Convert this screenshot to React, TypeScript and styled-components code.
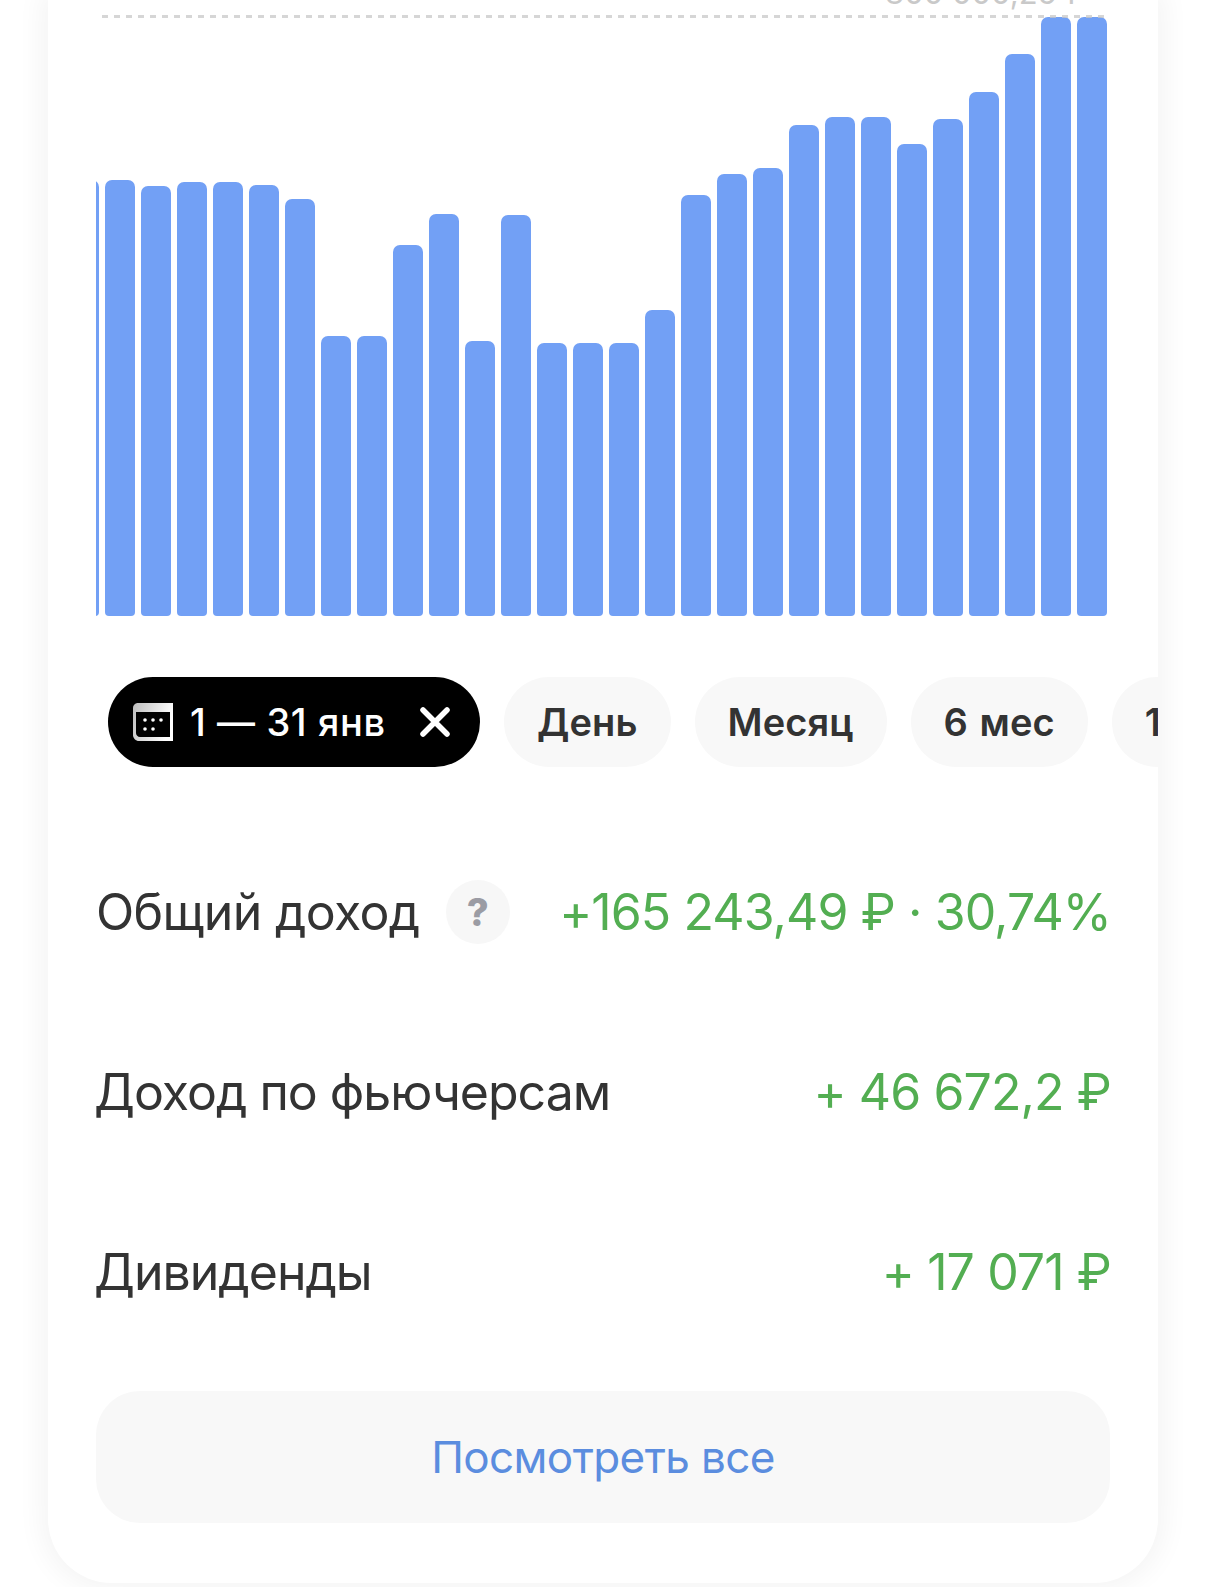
import styled, { createGlobalStyle } from 'styled-components';

const BAR_TOPS = [
  180, 180, 186, 182, 182, 185, 199, 336, 336, 245, 214, 341, 215, 343, 343, 343, 310, 195, 174, 168, 125, 117, 117,
  144, 119, 92, 54, 17, 17,
];
const CHART_BOTTOM = 616;

const FILTERS = ['День', 'Месяц', '6 мес', '1 год'];

const GlobalStyle = createGlobalStyle`
  html, body {
    margin: 0;
    height: 1587px;
    overflow: hidden;
    background: #fff;
  }
  body {
    font-family: Inter, "Noto Sans", sans-serif;
  }
`;

const Card = styled.div`
  width: 1110px;
  margin-left: 48px;
  box-sizing: border-box;
  padding: 17px 48px 60px;
  background: #fff;
  border-radius: 0 0 64px 64px;
  box-shadow: 0 0 26px 8px rgba(0, 0, 0, 0.045);
`;

const Chart = styled.div`
  position: relative;
  height: 599px;
`;

const MaxLabel = styled.div`
  position: absolute;
  right: 23px;
  bottom: 100%;
  margin-bottom: 1px;
  font-size: 31px;
  line-height: 46px;
  color: #c9c9c9;
  white-space: nowrap;
`;

const Bars = styled.div`
  height: 100%;
  padding-right: 3px;
  display: flex;
  align-items: flex-end;
  justify-content: flex-end;
  gap: 6px;
  overflow: hidden;
`;

const Bar = styled.div`
  flex: none;
  width: 30px;
  background: #72a0f5;
  border-radius: 7px 7px 4px 4px;
`;

const MaxLine = styled.div`
  position: absolute;
  top: -2px;
  left: 6px;
  right: 5px;
  height: 3px;
  background: repeating-linear-gradient(90deg, rgba(200, 200, 200, 0.75) 0 6px, transparent 6px 12px);
`;

const Filters = styled.div`
  margin: 61px -48px 55px 0;
  padding-left: 12px;
  display: flex;
  gap: 24px;
  overflow: hidden;
`;

const ActiveFilter = styled.div`
  flex: none;
  width: 372px;
  height: 90px;
  box-sizing: border-box;
  padding: 0 30px 0 25px;
  display: flex;
  align-items: center;
  background: #000;
  border-radius: 45px;
  color: #fff;
  font-size: 38px;
  font-weight: 500;
  letter-spacing: 0.6px;
`;

const ActiveLabel = styled.span`
  margin-left: 17px;
  flex: 1;
  white-space: nowrap;
`;

const FilterChip = styled.div`
  flex: none;
  height: 90px;
  padding: 0 33px;
  display: flex;
  align-items: center;
  background: #f8f8f8;
  border-radius: 45px;
  color: #333;
  font-size: 38px;
  font-weight: 600;
  letter-spacing: 0.1px;
  word-spacing: 2px;
  white-space: nowrap;
`;

const Row = styled.div`
  height: 180px;
  display: flex;
  align-items: center;
  justify-content: space-between;
`;

const RowTitle = styled.div<{ $hasHelp?: boolean }>`
  display: flex;
  align-items: center;
  gap: 26px;
  margin-left: ${props => (props.$hasHelp ? '0' : '-2px')};
  color: #333;
  font-size: 50px;
  letter-spacing: ${props => (props.$hasHelp ? '-0.65px' : '-1px')};
`;

const HelpBadge = styled.span`
  width: 64px;
  height: 64px;
  display: flex;
  align-items: center;
  justify-content: center;
  border-radius: 50%;
  background: #f7f7f7;
  color: #9b9ca4;
  font-size: 38px;
  font-weight: 800;
`;

const RowValue = styled.div`
  margin-right: -1px;
  color: #53ae52;
  font-size: 50px;
  letter-spacing: -0.9px;
  white-space: nowrap;
`;

const ShowAll = styled.div`
  margin-top: 29px;
  height: 132px;
  display: flex;
  align-items: center;
  justify-content: center;
  background: #f8f8f8;
  border-radius: 44px;
  color: #5b8ddf;
  font-size: 44px;
  letter-spacing: -0.6px;
`;

const CalendarIcon = () => (
  <svg width="40" height="38" viewBox="0 0 40 38" fill="none">
    <defs>
      <linearGradient id="calendar-head" x1="0" y1="0" x2="1" y2="0.3">
        <stop offset="0" stopColor="#bdbdbd" />
        <stop offset="1" stopColor="#fff" />
      </linearGradient>
    </defs>
    <path d="M5 0H40V38H6C2.7 38 0 35.3 0 32V5C0 2.2 2.2 0 5 0Z" fill="url(#calendar-head)" />
    <path d="M3 9H37V34H7C4.8 34 3 32.2 3 30V9Z" fill="#000" />
    <circle cx="12" cy="17" r="1.8" fill="#fff" />
    <circle cx="20" cy="17" r="1.8" fill="#fff" />
    <circle cx="28" cy="17" r="1.8" fill="#fff" />
    <circle cx="12" cy="26" r="1.8" fill="#fff" />
    <circle cx="20" cy="26" r="1.8" fill="#fff" />
  </svg>
);

const CloseIcon = () => (
  <svg width="30" height="30" viewBox="0 0 30 30" fill="none" stroke="#fff" strokeWidth="5.5" strokeLinecap="round">
    <path d="M3 3L27 27M27 3L3 27" />
  </svg>
);

export default function App() {
  return (
    <>
      <GlobalStyle />
      <Card>
        <Chart>
          <MaxLabel>800 000,25 ₽</MaxLabel>
          <Bars>
            {BAR_TOPS.map((top, index) => (
              <Bar key={index} style={{ height: CHART_BOTTOM - top }} />
            ))}
          </Bars>
          <MaxLine />
        </Chart>
        <Filters>
          <ActiveFilter>
            <CalendarIcon />
            <ActiveLabel>1 — 31 янв</ActiveLabel>
            <CloseIcon />
          </ActiveFilter>
          {FILTERS.map(filter => (
            <FilterChip key={filter}>{filter}</FilterChip>
          ))}
        </Filters>
        <Row>
          <RowTitle $hasHelp>
            Общий доход
            <HelpBadge>?</HelpBadge>
          </RowTitle>
          <RowValue>+165 243,49 ₽ · 30,74%</RowValue>
        </Row>
        <Row>
          <RowTitle>Доход по фьючерсам</RowTitle>
          <RowValue>+ 46 672,2 ₽</RowValue>
        </Row>
        <Row>
          <RowTitle>Дивиденды</RowTitle>
          <RowValue>+ 17 071 ₽</RowValue>
        </Row>
        <ShowAll>Посмотреть все</ShowAll>
      </Card>
    </>
  );
}
